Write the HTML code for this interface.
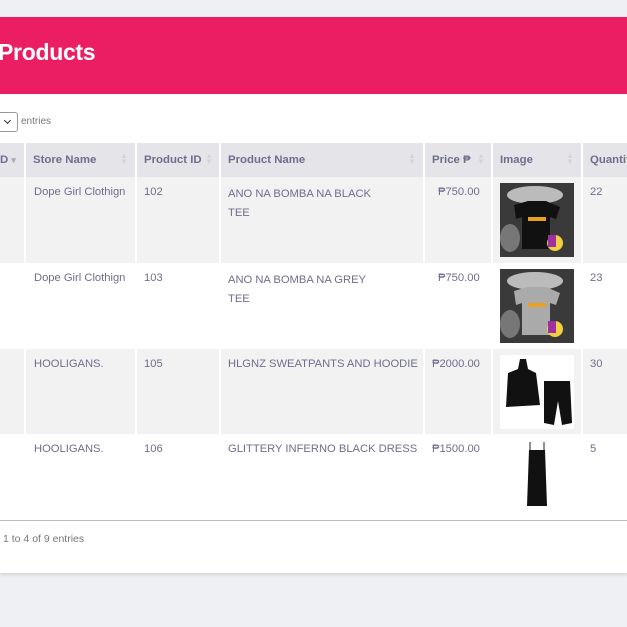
<!DOCTYPE html>
<html><head><meta charset="utf-8"><style>
*{margin:0;padding:0;box-sizing:border-box}
body{width:627px;height:627px;overflow:hidden;background:#eff0f4;font-family:"Liberation Sans",Arial,sans-serif;position:relative}
.hdr{position:absolute;left:0;top:17px;width:627px;height:77px;background:#ec1e63}
.hdr h1{position:absolute;left:-2px;top:22px;color:#fff;font-size:23px;font-weight:bold;letter-spacing:-0.3px}
.card{position:absolute;left:0;top:94px;width:627px;height:479px;background:#fff;box-shadow:0 2px 3px rgba(0,0,0,0.12)}
.sel{position:absolute;left:-6px;top:112px;width:24px;height:20px;border:1px solid #999;border-radius:3px;background:#fff}
.sel:after{content:"";position:absolute;left:10px;top:5px;width:4px;height:4px;border-right:1.5px solid #333;border-bottom:1.5px solid #333;transform:rotate(45deg)}
.ent{position:absolute;left:21px;top:116px;font-size:10px;color:#777}
.t{position:absolute;font-size:11.2px;color:#6e6e8c;white-space:nowrap}
.th{position:absolute;top:143px;height:34px;background:#e4e4e9;font-size:11.4px;font-weight:bold;color:#6e6e8c;padding:11px 8px;white-space:nowrap;overflow:hidden}
.row{position:absolute;left:0;width:627px;height:86px}
.vl{position:absolute;top:143px;height:377px;width:2px;background:#fff}
.sort{position:absolute;top:153px;font-size:8px;color:#d4d4dc;line-height:6px}
.foot{position:absolute;left:0;top:520px;width:627px;height:1px;background:#bbb}
</style></head><body>
<div class="hdr"><h1>Products</h1></div>
<div class="card"></div>
<div class="sel"></div><div class="ent">entries</div>

<div class="th" style="left:0;width:25px;padding-left:0">D <span style="color:#aab;font-size:9px">&#9662;</span></div>
<div class="th" style="left:25px;width:111px">Store Name</div>
<div class="th" style="left:136px;width:84px">Product ID</div>
<div class="th" style="left:220px;width:204px">Product Name</div>
<div class="th" style="left:424px;width:68px">Price &#8369;</div>
<div class="th" style="left:492px;width:90px">Image</div>
<div class="th" style="left:582px;width:45px">Quantity</div>
<div class="sort" style="left:120px">&#9650;<br>&#9660;</div>
<div class="sort" style="left:205px">&#9650;<br>&#9660;</div>
<div class="sort" style="left:408px">&#9650;<br>&#9660;</div>
<div class="sort" style="left:477px">&#9650;<br>&#9660;</div>
<div class="sort" style="left:566px">&#9650;<br>&#9660;</div>

<div class="row" style="top:177px;background:#f2f2f2"></div>
<div class="row" style="top:263px;background:#fff"></div>
<div class="row" style="top:349px;background:#f2f2f2"></div>
<div class="row" style="top:434px;background:#fff"></div>

<div class="vl" style="left:24px"></div><div class="vl" style="left:135px"></div><div class="vl" style="left:219px"></div><div class="vl" style="left:423px"></div><div class="vl" style="left:491px"></div><div class="vl" style="left:581px"></div>

<div class="t" style="left:34px;top:186px">Dope Girl Clothign</div>
<div class="t" style="left:144px;top:186px">102</div>
<div class="t" style="left:228px;top:185px;line-height:19px">ANO NA BOMBA NA BLACK<br>TEE</div>
<div class="t" style="left:438px;top:186px">&#8369;750.00</div>
<div class="t" style="left:590px;top:186px">22</div>

<div class="t" style="left:34px;top:272px">Dope Girl Clothign</div>
<div class="t" style="left:144px;top:272px">103</div>
<div class="t" style="left:228px;top:271px;line-height:19px">ANO NA BOMBA NA GREY<br>TEE</div>
<div class="t" style="left:438px;top:272px">&#8369;750.00</div>
<div class="t" style="left:590px;top:272px">23</div>

<div class="t" style="left:34px;top:358px">HOOLIGANS.</div>
<div class="t" style="left:144px;top:358px">105</div>
<div class="t" style="left:228px;top:358px">HLGNZ SWEATPANTS AND HOODIE</div>
<div class="t" style="left:432px;top:358px">&#8369;2000.00</div>
<div class="t" style="left:590px;top:358px">30</div>

<div class="t" style="left:34px;top:443px">HOOLIGANS.</div>
<div class="t" style="left:144px;top:443px">106</div>
<div class="t" style="left:228px;top:443px">GLITTERY INFERNO BLACK DRESS</div>
<div class="t" style="left:432px;top:443px">&#8369;1500.00</div>
<div class="t" style="left:590px;top:443px">5</div>

<svg style="position:absolute;left:500px;top:183px" width="74" height="74" viewBox="0 0 74 74">
<rect width="74" height="74" fill="#3a3a3a"/><ellipse cx="35" cy="12" rx="28" ry="9" fill="#bbb"/><ellipse cx="10" cy="55" rx="10" ry="14" fill="#777"/>
<path d="M14 22 L28 18 L46 18 L60 24 L56 36 L50 34 L50 66 L22 66 L22 34 L16 36Z" fill="#111"/>
<rect x="28" y="34" width="18" height="4" fill="#e8a020"/><circle cx="55" cy="60" r="8" fill="#f0d040"/><rect x="48" y="52" width="8" height="12" fill="#a030a0"/></svg>
<svg style="position:absolute;left:500px;top:269px" width="74" height="74" viewBox="0 0 74 74">
<rect width="74" height="74" fill="#3a3a3a"/><ellipse cx="35" cy="12" rx="28" ry="9" fill="#bbb"/><ellipse cx="10" cy="55" rx="10" ry="14" fill="#777"/>
<path d="M14 22 L28 18 L46 18 L60 24 L56 36 L50 34 L50 66 L22 66 L22 34 L16 36Z" fill="#aaa"/>
<rect x="28" y="34" width="18" height="4" fill="#e8a020"/><circle cx="55" cy="60" r="8" fill="#f0d040"/><rect x="48" y="52" width="8" height="12" fill="#a030a0"/></svg>
<svg style="position:absolute;left:500px;top:355px" width="74" height="74" viewBox="0 0 74 74">
<rect width="74" height="74" fill="#fff"/><path d="M20 4 L26 4 L28 14 L36 18 L40 50 L6 52 L8 18 L18 14Z" fill="#111"/>
<path d="M44 26 L70 26 L72 68 L62 70 L58 46 L54 70 L44 68Z" fill="#111"/></svg>
<svg style="position:absolute;left:520px;top:442px" width="34" height="66" viewBox="0 0 34 66">
<path d="M10 0 V8 M24 0 V8" stroke="#222" stroke-width="1"/><path d="M9 8 L25 8 L27 64 L7 64Z" fill="#111"/></svg>

<div class="foot"></div>
<div class="t" style="left:3px;top:533px;font-size:10.5px;color:#777">1 to 4 of 9 entries</div>
</body></html>
